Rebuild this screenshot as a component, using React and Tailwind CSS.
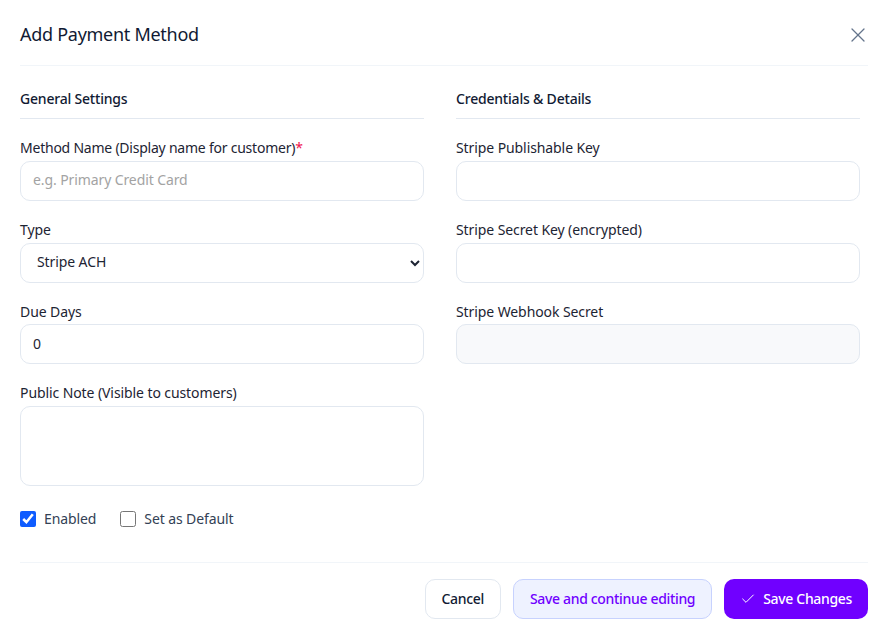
import React from 'react'
import { X, Check } from 'lucide-react'

const INPUT = 'block w-full h-10 px-3 text-sm tracking-[-0.1px] border border-[#e2e8f0] rounded-[10px] text-[#1d2433] placeholder:text-[#a3a3a3] focus:outline-none'
const HEADING = 'mt-[23px] h-[30px] text-sm font-medium leading-5 tracking-[-0.2px] text-[#111a33] border-b border-[#e2e8f0]'
const BUTTON = 'h-10 px-4 pb-[1px] text-sm font-medium tracking-[-0.33px] rounded-[10px]'

function Field({ label, required, children }) {
  return (
    <div className="mt-[19px]">
      <label className={`block text-sm leading-5 h-5 text-[#1d2433] ${required ? 'tracking-[-0.23px]' : 'tracking-[-0.09px]'}`}>
        {label}
        {required && <span className="text-[#f0134d]">*</span>}
      </label>
      {children}
    </div>
  )
}

export default function App() {
  return (
    <div className="w-[886px] h-[638px] bg-white pl-5 pr-[18px] overflow-hidden font-['Noto_Sans',sans-serif]">
      {/* Header */}
      <div className="flex items-center justify-between h-[66px] pt-[2px] border-b border-[#f1f5f9]">
        <h2 className="text-lg font-normal tracking-[-0.28px] text-[#111a33]">Add Payment Method</h2>
        <button className="-mr-[2px] mt-[2px] text-[#64748b]">
          <X size={24} strokeWidth={1.3} />
        </button>
      </div>

      {/* Form */}
      <div className="grid grid-cols-[404px_404px] gap-x-8 h-[497px] border-b border-[#f1f5f9]">
        <div>
          <h3 className={HEADING}>General Settings</h3>
          <Field label="Method Name (Display name for customer)" required>
            <input className={`${INPUT} mt-[3px] pb-[3px] bg-white`} placeholder="e.g. Primary Credit Card" />
          </Field>
          <Field label="Type">
            <select defaultValue="Stripe ACH" className={`${INPUT} mt-[3px] pb-[3px] px-2 bg-white`}>
              <option>Stripe ACH</option>
              <option>Stripe Card</option>
            </select>
          </Field>
          <Field label="Due Days">
            <input className={`${INPUT} mt-[2px] pb-[1px] bg-white`} defaultValue="0" />
          </Field>
          <Field label="Public Note (Visible to customers)">
            <textarea className={`${INPUT} mt-[3px] h-20 py-2 resize-none bg-white`} />
          </Field>
          <div className="flex items-center gap-6 mt-[23px]">
            <label className="flex items-center gap-2 text-sm tracking-[-0.1px] text-[#334155]">
              <input type="checkbox" defaultChecked className="w-4 h-4 accent-[#0f5cff]" />
              Enabled
            </label>
            <label className="flex items-center gap-2 text-sm tracking-[-0.1px] text-[#334155]">
              <input type="checkbox" className="w-4 h-4" />
              Set as Default
            </label>
          </div>
        </div>

        <div>
          <h3 className={HEADING}>Credentials &amp; Details</h3>
          <Field label="Stripe Publishable Key">
            <input className={`${INPUT} mt-[3px] bg-white`} />
          </Field>
          <Field label="Stripe Secret Key (encrypted)">
            <input className={`${INPUT} mt-[3px] bg-white`} />
          </Field>
          <Field label="Stripe Webhook Secret">
            <input className={`${INPUT} mt-[2px] bg-[#f8f9fb]`} />
          </Field>
        </div>
      </div>

      {/* Footer */}
      <div className="flex justify-end gap-3 pt-4">
        <button className={`${BUTTON} text-[#111a33] bg-white border border-[#e2e8f0]`}>Cancel</button>
        <button className={`${BUTTON} text-[#7000ff] bg-[#eef2ff] border border-[#c7d2fe]`}>Save and continue editing</button>
        <button className={`${BUTTON} flex items-center gap-[7px] text-white bg-[#7000ff]`}>
          <Check size={16} strokeWidth={1.5} />
          Save Changes
        </button>
      </div>
    </div>
  )
}
